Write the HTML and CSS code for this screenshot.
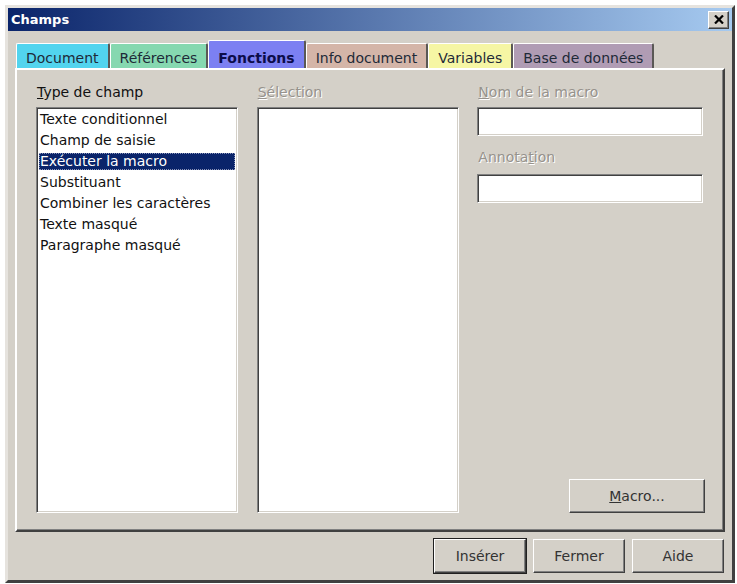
FILE: index.html
```html
<!DOCTYPE html>
<html lang="fr">
<head>
  <meta charset="UTF-8">
  <title>Champs</title>
  <link rel="stylesheet" href="styles.css">
</head>
<body>
<div class="window">
  <div class="titlebar">
    <span class="title">Champs</span>
    <span class="close-btn">
      <svg width="10" height="9" viewBox="0 0 10 9">
        <path d="M1 0.5 L9 8.5 M9 0.5 L1 8.5" stroke="#000" stroke-width="2.2"/>
      </svg>
    </span>
  </div>

  <div class="dialog-body">
    <div class="tabs">
      <div class="tab tab-document">Document</div>
      <div class="tab tab-references">Références</div>
      <div class="tab tab-fonctions active">Fonctions</div>
      <div class="tab tab-info">Info document</div>
      <div class="tab tab-variables">Variables</div>
      <div class="tab tab-base">Base de données</div>
    </div>

    <div class="panel">
      <div class="col col-type">
        <div class="label"><u>T</u>ype de champ</div>
        <ul class="list sunken">
          <li>Texte conditionnel</li>
          <li>Champ de saisie</li>
          <li class="selected">Exécuter la macro</li>
          <li>Substituant</li>
          <li>Combiner les caractères</li>
          <li>Texte masqué</li>
          <li>Paragraphe masqué</li>
        </ul>
      </div>

      <div class="col col-sel">
        <div class="label disabled"><u>S</u>élection</div>
        <div class="list sunken"></div>
      </div>

      <div class="col col-macro">
        <div class="label disabled"><u>N</u>om de la macro</div>
        <div class="field sunken"></div>
        <div class="label disabled label-second">Annota<u>t</u>ion</div>
        <div class="field field-second sunken"></div>
        <div class="btn macro-btn"><u>M</u>acro...</div>
      </div>
    </div>

    <div class="actions">
      <div class="btn default-btn">Insérer</div>
      <div class="btn">Fermer</div>
      <div class="btn">Aide</div>
    </div>
  </div>
</div>
</body>
</html>
```

FILE: styles.css
```css
body {
  margin: 0;
  background-color: #ffffff;
  font-family: "DejaVu Sans", sans-serif;
  font-size: 14px;
  color: #111;
}
.window {
  margin: 5px 0 0 5px;
  width: 724px;
  height: 572px;
  background-color: #d4d0c8;
  border: 3px solid;
  border-color: #e6e3de #404040 #404040 #e6e3de;
}
.titlebar {
  height: 23px;
  display: flex;
  align-items: center;
  justify-content: space-between;
  padding: 0 3px 0 3px;
  background: linear-gradient(to right, #0a246a, #a6caf0);
}
.title {
  color: #fff;
  font-weight: bold;
  font-size: 13px;
  line-height: 23px;
}
.close-btn {
  width: 19px;
  height: 16px;
  display: flex;
  align-items: center;
  justify-content: center;
  background-color: #d4d0c8;
  border: 1px solid;
  border-color: #fff #404040 #404040 #fff;
  box-shadow: inset -1px -1px 0 #808080;
}
.dialog-body {
  padding: 9px 7px 7px 7px;
}
.tabs {
  height: 28px;
  display: flex;
  align-items: flex-end;
  padding-left: 1px;
}
.tab {
  padding: 5px 9px 0 9px;
  line-height: 19px;
  border-top: 1px solid #fff;
  border-left: 1px solid #fff;
  border-right: 2px solid #5a5855;
  border-radius: 2px 2px 0 0;
  color: #1e2a38;
  white-space: nowrap;
}
.tab.active {
  padding-top: 8px;
  font-weight: bold;
  color: #0c0c4a;
}
.tab-document { background-color: #52d4ee; }
.tab-references { background-color: #86d8b0; }
.tab-fonctions { background-color: #7c80f2; }
.tab-info { background-color: #d4b5a8; }
.tab-variables { background-color: #f6f6a4; }
.tab-base { background-color: #b09cb4; }

.panel {
  display: flex;
  gap: 19px;
  padding: 13px 19px 17px 19px;
  box-sizing: content-box;
  border: 2px solid;
  border-color: #fff #404040 #404040 #fff;
  box-shadow: inset -1px -1px 0 #808080;
  height: 430px;
}
.col {
  display: flex;
  flex-direction: column;
}
.col-type { width: 202px; }
.col-sel { width: 203px; margin-right: -1px; }
.col-macro { width: 227px; }

.label {
  line-height: 18px;
  height: 18px;
  margin-bottom: 6px;
  padding-left: 1px;
  white-space: nowrap;
}
.label.disabled {
  color: #96928c;
  text-shadow: 1px 1px 0 #fff;
}
.label-second {
  margin-top: 12px;
  margin-bottom: 8px;
}
.sunken {
  background-color: #fff;
  border: 1px solid;
  border-color: #808080 #fff #fff #808080;
  box-shadow: inset 1px 1px 0 #404040, inset -1px -1px 0 #d4d0c8;
}
.list {
  flex: 1;
  margin: 0;
  padding: 3px 2px 0 2px;
  list-style: none;
}
.list li {
  height: 17px;
  line-height: 17px;
  margin-bottom: 4px;
  padding-left: 1px;
  white-space: nowrap;
}
.list li.selected {
  background-color: #0a246a;
  color: #fff;
  outline: 1px dotted #8b94b8;
  outline-offset: -1px;
}
.field {
  height: 27px;
  margin-right: 1px;
}
.btn {
  height: 32px;
  width: 90px;
  display: flex;
  align-items: center;
  justify-content: center;
  background-color: #d4d0c8;
  border: 1px solid;
  border-color: #fff #404040 #404040 #fff;
  box-shadow: inset -1px -1px 0 #808080;
  color: #333;
}
.macro-btn {
  margin-top: auto;
  align-self: flex-end;
  width: 134px;
  margin-right: -1px;
}
.actions {
  margin-top: 7px;
  display: flex;
  justify-content: flex-end;
  gap: 7px;
  padding-right: 1px;
}
.default-btn {
  outline: 1px solid #202020;
}
```
